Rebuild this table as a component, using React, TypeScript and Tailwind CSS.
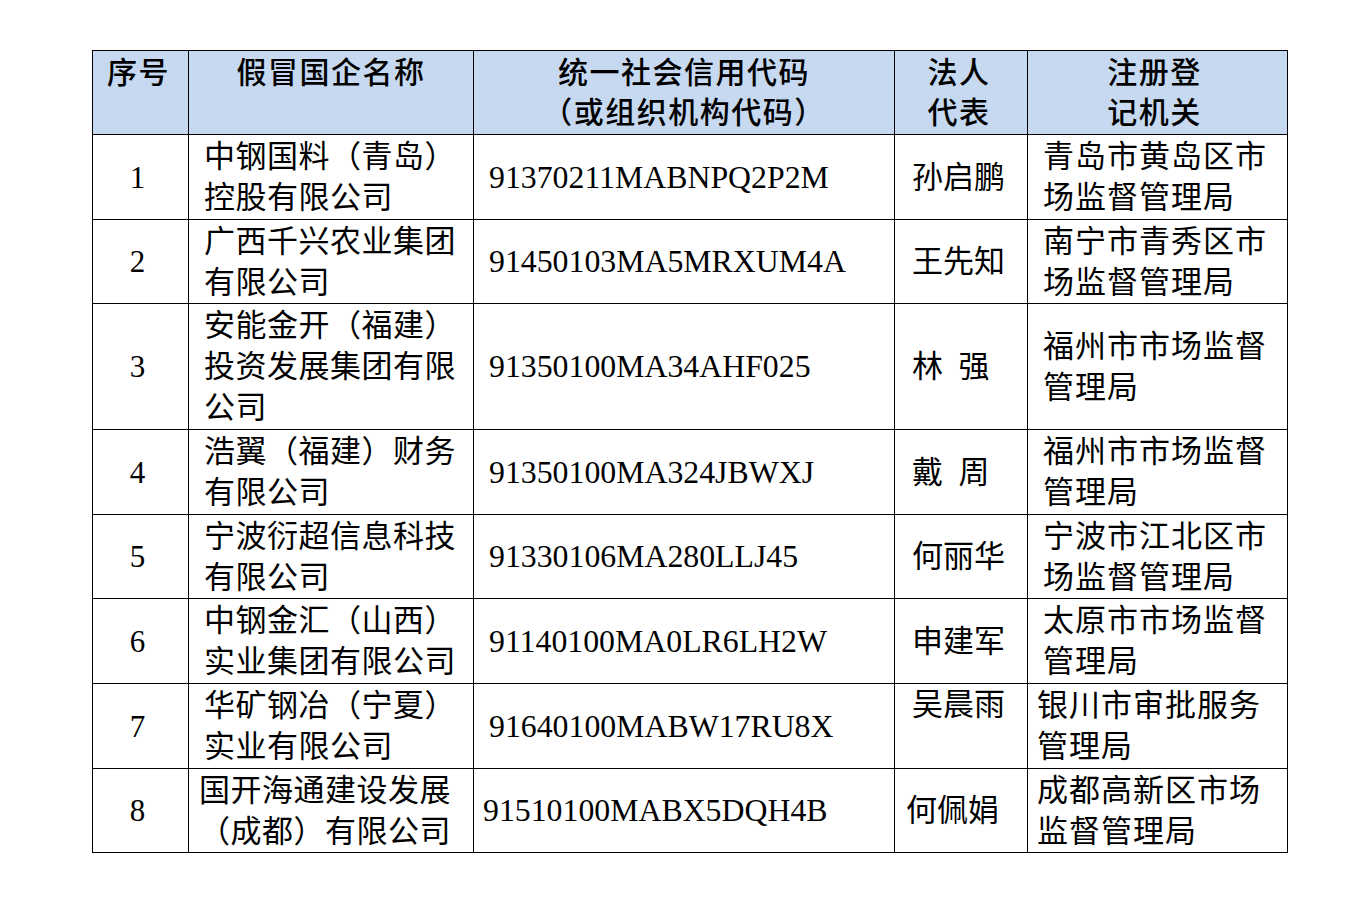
import React from "react";

type Row = {
  no: string;
  name: string[];
  code: string;
  rep: string;
  org: string[];
  h: string;
  tight?: boolean;
  repTop?: boolean;
  orgTight?: boolean;
};

const rows: Row[] = [
  { no: "1", name: ["中钢国料（青岛）", "控股有限公司"], code: "91370211MABNPQ2P2M", rep: "孙启鹏", org: ["青岛市黄岛区市", "场监督管理局"], h: "h-[85px]" },
  { no: "2", name: ["广西千兴农业集团", "有限公司"], code: "91450103MA5MRXUM4A", rep: "王先知", org: ["南宁市青秀区市", "场监督管理局"], h: "h-[84px]" },
  { no: "3", name: ["安能金开（福建）", "投资发展集团有限", "公司"], code: "91350100MA34AHF025", rep: "林\u00a0\u00a0强", org: ["福州市市场监督", "管理局"], h: "h-[126px]" },
  { no: "4", name: ["浩翼（福建）财务", "有限公司"], code: "91350100MA324JBWXJ", rep: "戴\u00a0\u00a0周", org: ["福州市市场监督", "管理局"], h: "h-[85px]" },
  { no: "5", name: ["宁波衍超信息科技", "有限公司"], code: "91330106MA280LLJ45", rep: "何丽华", org: ["宁波市江北区市", "场监督管理局"], h: "h-[84px]" },
  { no: "6", name: ["中钢金汇（山西）", "实业集团有限公司"], code: "91140100MA0LR6LH2W", rep: "申建军", org: ["太原市市场监督", "管理局"], h: "h-[85px]" },
  { no: "7", name: ["华矿钢冶（宁夏）", "实业有限公司"], code: "91640100MABW17RU8X", rep: "吴晨雨", org: ["银川市审批服务", "管理局"], h: "h-[85px]", repTop: true, orgTight: true },
  { no: "8", name: ["国开海通建设发展", "（成都）有限公司"], code: "91510100MABX5DQH4B", rep: "何佩娟", org: ["成都高新区市场", "监督管理局"], h: "h-[84px]", tight: true, orgTight: true },
];

const cell = "border border-black p-0";

export default function App() {
  return (
    <div className="min-h-[914px] w-[1371px] bg-white pt-[50px] pl-[92px] text-black font-['Liberation_Serif','Noto_Sans_CJK_SC',serif]">
      <table className="w-[1195px] table-fixed border-collapse">
        <colgroup>
          <col className="w-[96px]" />
          <col className="w-[285px]" />
          <col className="w-[421px]" />
          <col className="w-[133px]" />
          <col className="w-[260px]" />
        </colgroup>
        <thead>
          <tr className="h-[84px] bg-[#c6d9f1] text-[30px] font-medium leading-[40px] tracking-[1.5px]">
            <th className={`${cell} align-top pt-[2px] pr-[4px] text-center font-medium`}>序号</th>
            <th className={`${cell} align-top pt-[2px] text-center font-medium`}>假冒国企名称</th>
            <th className={`${cell} align-top pt-[2px] text-center font-medium`}>
              统一社会信用代码
              <br />
              （或组织机构代码）
            </th>
            <th className={`${cell} align-top pt-[2px] pr-[4px] text-center font-medium`}>
              法人
              <br />
              代表
            </th>
            <th className={`${cell} align-top pt-[2px] pr-[6px] text-center font-medium`}>
              注册登
              <br />
              记机关
            </th>
          </tr>
        </thead>
        <tbody className="text-[31px] leading-[41px]">
          {rows.map((r) => (
            <tr key={r.no} className={r.h}>
              <td className={`${cell} text-center align-middle pr-[6px]`}>{r.no}</td>
              <td className={`${cell} align-middle tracking-[0.5px] ${r.tight ? "pl-[10px]" : "pl-[15px]"}`}>
                {r.name.map((l, i) => (
                  <div key={i}>{l}</div>
                ))}
              </td>
              <td className={`${cell} align-middle text-[31.8px] ${r.tight ? "pl-[9px]" : "pl-[15px]"}`}>{r.code}</td>
              <td className={`${cell} ${r.repTop ? "align-top" : "align-middle"} ${r.tight ? "pl-[11px]" : "pl-[17px]"}`}>
                {r.rep}
              </td>
              <td className={`${cell} align-middle tracking-[1px] ${r.orgTight ? "pl-[9px]" : "pl-[15px]"}`}>
                {r.org.map((l, i) => (
                  <div key={i}>{l}</div>
                ))}
              </td>
            </tr>
          ))}
        </tbody>
      </table>
    </div>
  );
}
